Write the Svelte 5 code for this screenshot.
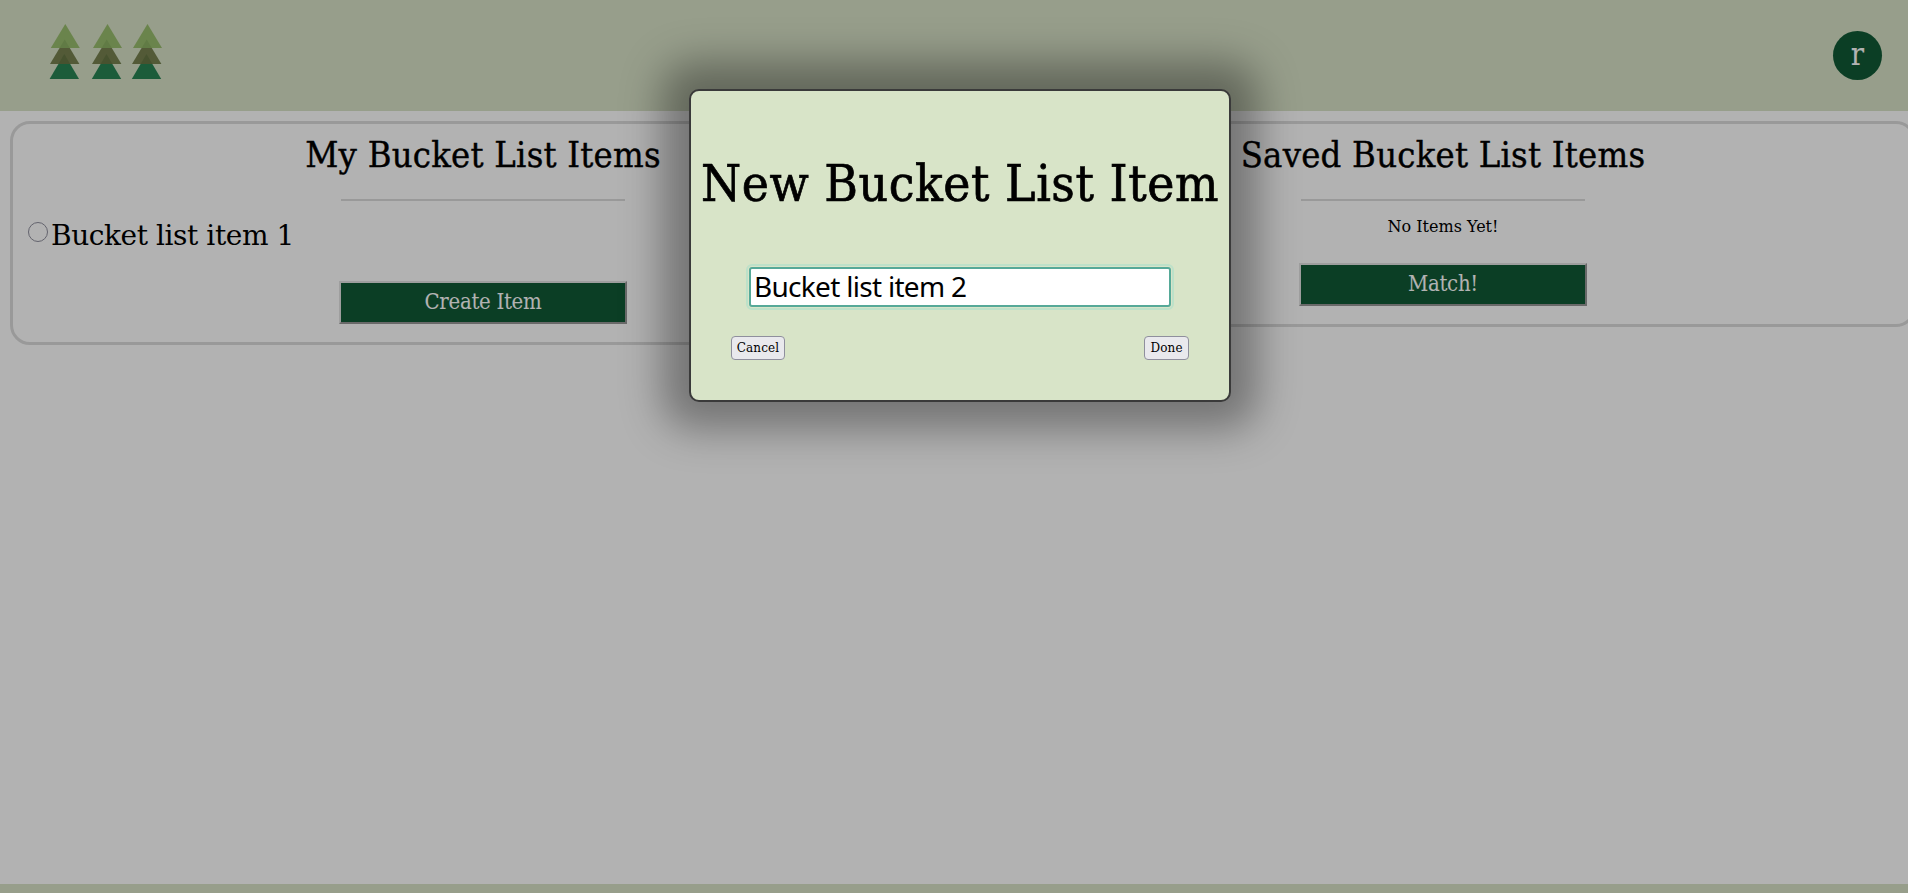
<script>
  let draft = $state('Bucket list item 2');
  const trees = [
    { top: 65.3, mid: 64.7, low: 64.3 },
    { top: 107.5, mid: 106.7, low: 106.5 },
    { top: 147.5, mid: 146.7, low: 146.5 }
  ];
  const tri = (cx, y, h, w) => `${cx},${y} ${cx + w},${y + h} ${cx - w},${y + h}`;
</script>

<div class="page">
  <header>
    <svg class="logo" width="180" height="111" viewBox="0 0 180 111" aria-hidden="true">
      {#each trees as t}
        <polygon points={tri(t.low, 54, 25, 14.7)} fill="#298554" />
        <polygon points={tri(t.mid, 39.5, 24.5, 14.7)} fill="#778250" />
        <polygon points={tri(t.low, 54, 10, 5.9)} fill="#667644" />
        <polygon points={tri(t.top, 24, 24, 14.5)} fill="#99bd6d" />
        <polygon points={tri(t.mid, 39.5, 8.5, 5.1)} fill="#8bb163" />
      {/each}
    </svg>
    <div class="avatar">r</div>
  </header>

  <main>
    <section class="card">
      <h2>My Bucket List Items</h2>
      <hr />
      <label class="item"><span class="radio"></span><span>Bucket list item 1</span></label>
      <button class="action">Create Item</button>
    </section>
    <section class="card">
      <h2>Saved Bucket List Items</h2>
      <hr />
      <p class="empty">No Items Yet!</p>
      <button class="action">Match!</button>
    </section>
  </main>
  <footer></footer>
</div>

<div class="overlay">
  <div class="modal">
    <h1>New Bucket List Item</h1>
    <input bind:value={draft} />
    <div class="buttons">
      <button class="cancel">Cancel</button>
      <button class="done">Done</button>
    </div>
  </div>
</div>

<style>
  :global(body) { overflow: hidden; }
  * { box-sizing: border-box; }
  .page {
    height: 893px;
    width: 1908px;
    overflow: hidden;
    display: flex;
    flex-direction: column;
    background: #fff;
    color: #000;
    font-family: "DejaVu Serif", serif;
  }
  header {
    height: 111px;
    flex: none;
    display: flex;
    justify-content: space-between;
    align-items: center;
    padding-right: 26px;
    background: #d8e2c7;
  }
  .logo { display: block; }
  .avatar {
    width: 49px;
    height: 49px;
    border-radius: 50%;
    background: #105a35;
    color: #fff;
    font: 31px/47px "DejaVu Serif Condensed", "DejaVu Serif", serif;
    text-align: center;
  }
  main {
    flex: 1;
    display: flex;
    align-items: flex-start;
    gap: 14px;
    padding: 10px 0 0 10px;
  }
  .card {
    width: 946px;
    flex: none;
    border: 3px solid #dcdcdc;
    border-radius: 20px;
    padding-bottom: 18px;
    display: flex;
    flex-direction: column;
    align-items: center;
  }
  h2 {
    margin: 7px 0 0;
    height: 68px;
    line-height: 48px;
    font-size: 36px;
    letter-spacing: 0.25px;
    font-weight: 400;
    font-family: "DejaVu Serif Condensed", "DejaVu Serif", serif;
    font-stretch: condensed;
    -webkit-text-stroke: 0.4px #000;
    white-space: nowrap;
  }
  hr {
    width: 284px;
    height: 2px;
    margin: 0;
    border: 0;
    background: #dcdcdc;
  }
  .item {
    align-self: stretch;
    display: flex;
    padding-left: 15px;
    margin-top: 17px;
    height: 63px;
    gap: 3px;
    font-size: 28px;
    line-height: 36px;
    letter-spacing: -0.42px;
    white-space: nowrap;
  }
  .radio {
    width: 20px;
    height: 20px;
    margin-top: 4px;
    border: 1px solid #8f8f9d;
    border-radius: 50%;
  }
  .empty {
    margin: 14px 0 0;
    height: 48px;
    font-size: 16px;
    line-height: 24px;
    white-space: nowrap;
  }
  .action {
    width: 288px;
    height: 43px;
    padding: 0 0 2px;
    border: 2px solid;
    border-color: #e3e3e3 #979797 #979797 #e3e3e3;
    background: #105a35;
    color: #fff;
    font-size: 22px;
    letter-spacing: -0.3px;
    font-family: "DejaVu Serif Condensed", "DejaVu Serif", serif;
    font-stretch: condensed;
    white-space: nowrap;
  }
  footer { height: 9px; flex: none; background: #d8e2c7; }
  .overlay {
    position: absolute;
    inset: 0;
    height: 893px;
    background: rgba(0, 0, 0, 0.3);
    display: flex;
    justify-content: center;
    align-items: flex-start;
    padding: 89px 0 0 12px;
  }
  .modal {
    width: 542px;
    height: 313px;
    border: 2px solid #3a3a3a;
    border-radius: 10px;
    background: #d8e4c8;
    box-shadow: 0 0 40px 27px rgba(0, 0, 0, 0.35);
    display: flex;
    flex-direction: column;
    align-items: center;
  }
  h1 {
    margin: 57px 0 0;
    height: 119px;
    line-height: 71px;
    font-size: 51px;
    letter-spacing: 0.55px;
    font-weight: 400;
    font-family: "DejaVu Serif Condensed", "DejaVu Serif", serif;
    font-stretch: condensed;
    -webkit-text-stroke: 0.7px #000;
    white-space: nowrap;
  }
  input {
    width: 422px;
    height: 40px;
    padding: 0 0 2px 3px;
    border: 2px solid #56a998;
    border-radius: 3px;
    outline: 2px solid #bde1c9;
    outline-offset: 1px;
    background: #fff;
    color: #000;
    font: 28px "Noto Sans", sans-serif;
    letter-spacing: -0.7px;
  }
  .buttons {
    align-self: stretch;
    display: flex;
    justify-content: space-between;
    padding: 29px 40px 0;
  }
  .buttons button {
    height: 24px;
    padding: 0 0 2px;
    border: 1px solid #8f8f9d;
    border-radius: 4px;
    background: #e9e9ed;
    color: #000;
    font: 13.33px "DejaVu Serif Condensed", "DejaVu Serif", serif;
    font-stretch: condensed;
    letter-spacing: 0.15px;
  }
  .buttons .cancel { width: 54px; }
  .buttons .done { width: 45px; }
</style>
